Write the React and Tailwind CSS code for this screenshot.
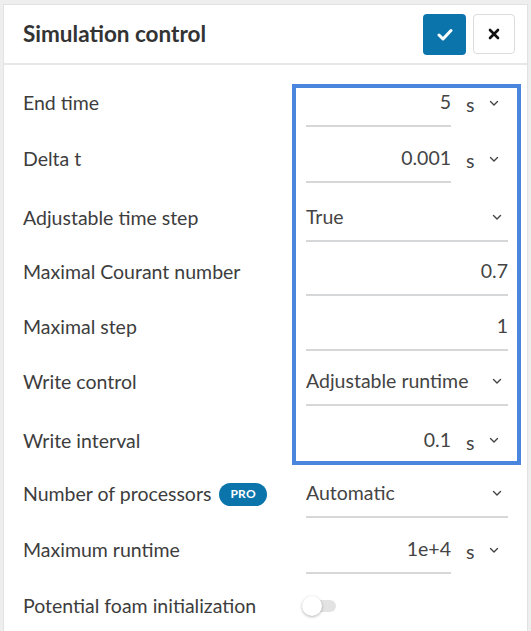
import React from 'react';

const Chevron = () => (
  <svg width="10" height="7" viewBox="0 0 10 7" className="shrink-0">
    <path d="M1.5 1.5 L5 5 L8.5 1.5" fill="none" stroke="#444" strokeWidth="1.4" strokeLinecap="round" strokeLinejoin="round" />
  </svg>
);

const UnitField = ({ value, unit = 's' }) => (
  <div className="flex items-center w-[202px]">
    <div className="w-[145px] h-[48px] flex items-center justify-end border-b-2 border-[#d5d7d9] text-[#444]">{value}</div>
    <div className="flex-1 flex items-center pl-[15px] gap-[15px]">
      <span className="text-[#444] pt-[4px]">{unit}</span>
      <Chevron />
    </div>
  </div>
);

const SelectField = ({ value }) => (
  <div className="w-[202px] h-[48px] flex items-center justify-between pr-[6px] border-b-2 border-[#d5d7d9] text-[#444]">
    <span>{value}</span>
    <Chevron />
  </div>
);

const NumberField = ({ value }) => (
  <div className="w-[202px] h-[48px] flex items-center justify-end border-b-2 border-[#d5d7d9] text-[#444]">{value}</div>
);

const Toggle = () => (
  <div className="relative -ml-[4px] w-[36px] h-[22px] flex items-center">
    <div className="ml-[4px] w-[30px] h-[12px] rounded-full bg-[#e3e3e3]" />
    <div className="absolute left-0 top-[1px] w-[20px] h-[20px] rounded-full bg-white shadow-[0_1px_3px_rgba(0,0,0,0.3)]" />
  </div>
);

const rows = [
  { label: 'End time', field: <UnitField value="5" /> },
  { label: 'Delta t', field: <UnitField value="0.001" /> },
  { label: 'Adjustable time step', shift: 'pt-[6px]', field: <SelectField value="True" /> },
  { label: 'Maximal Courant number', shift: 'pt-[2px]', field: <NumberField value="0.7" /> },
  { label: 'Maximal step', field: <NumberField value="1" /> },
  { label: 'Write control', shift: 'pb-[2px]', field: <SelectField value="Adjustable runtime" /> },
  { label: 'Write interval', shift: 'pt-[3px]', field: <UnitField value="0.1" /> },
  { label: 'Number of processors', pro: true, shift: 'pb-[2px]', field: <SelectField value="Automatic" /> },
  { label: 'Maximum runtime', shift: 'pb-[2px]', field: <UnitField value="1e+4" /> },
  { label: 'Potential foam initialization', shift: 'pb-[2px]', field: <Toggle /> }
];

export default function App() {
  return (
    <div className="h-[631px] bg-[#eeeeee] px-[3px] pt-[4px] overflow-hidden font-['Lato',sans-serif]">
      <div className="relative h-full bg-white border border-[#e2e2e2] border-b-0">
        <div className="h-[60px] flex items-center justify-between pl-[19px] pr-[12px] border-b-2 border-[#e8e8e8]">
          <h1 className="text-[22.5px] font-bold text-[#333]">Simulation control</h1>
          <div className="flex items-center gap-[7px]">
            <button className="w-[43px] h-[41px] rounded-[4px] bg-[#0b74ab] flex items-center justify-center">
              <svg width="16" height="13" viewBox="0 0 16 13">
                <path d="M2 7 L6 11 L14 2.5" fill="none" stroke="white" strokeWidth="3" strokeLinecap="round" strokeLinejoin="round" />
              </svg>
            </button>
            <button className="w-[42px] h-[40px] rounded-[4px] bg-white border border-[#dcdcdc] flex items-center justify-center">
              <svg width="12" height="12" viewBox="0 0 12 12">
                <path d="M2 2 L10 10 M10 2 L2 10" fill="none" stroke="#111" strokeWidth="2.6" strokeLinecap="round" />
              </svg>
            </button>
          </div>
        </div>

        <div className="pt-[10px] text-[19.5px]">
          {rows.map((row) => (
            <div key={row.label} className={`h-[56px] flex items-center pl-[19px] ${row.shift || ''}`}>
              <div className="w-[283px] flex items-center gap-[8px] text-[#3d3d3d]">
                <span>{row.label}</span>
                {row.pro ? (
                  <span className="h-[23px] px-[11px] rounded-full bg-[#0b74ab] text-white text-[12px] font-bold flex items-center tracking-wide">PRO</span>
                ) : null}
              </div>
              {row.field}
            </div>
          ))}
        </div>

        <div className="absolute left-[288px] top-[79px] w-[229px] h-[381px] border-4 border-[#4a86dd] pointer-events-none" />
      </div>
    </div>
  );
}
